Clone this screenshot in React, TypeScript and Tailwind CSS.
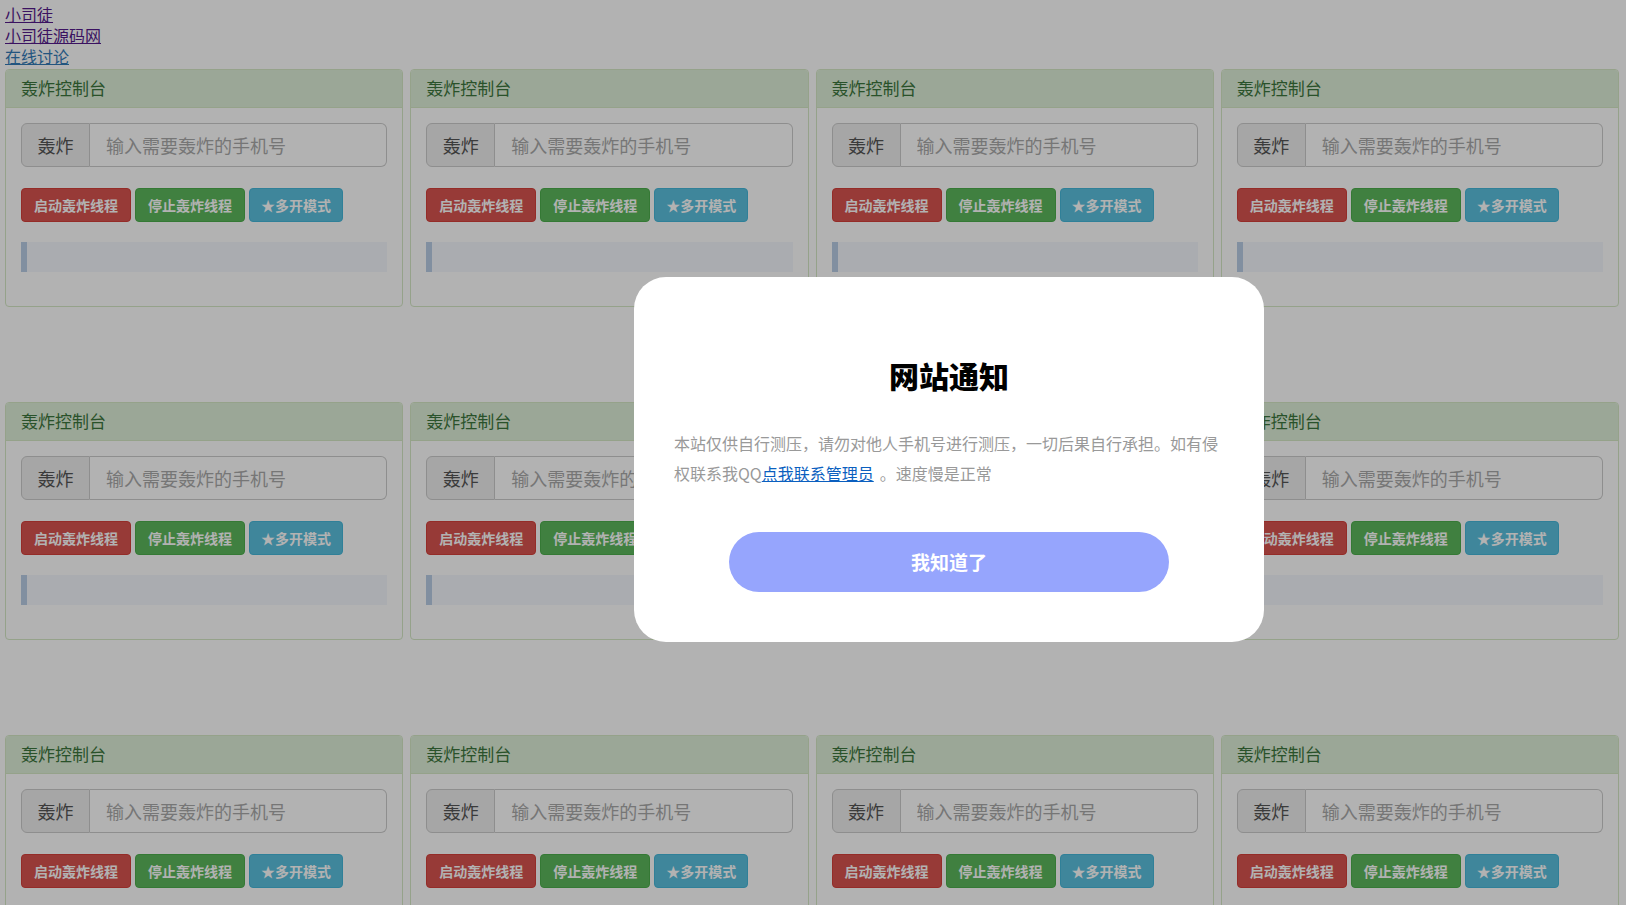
const links = [
  { label: "小司徒", visited: true },
  { label: "小司徒源码网", visited: true },
  { label: "在线讨论", visited: false },
];

function BombCard() {
  return (
    <div className="rounded-[4px] border border-[#d6e9c6] bg-white">
      <div className="h-[38px] border-b border-[#d6e9c6] bg-[#dff0d8] px-[15px] text-[17px] leading-[36px] text-[#3c763d] rounded-t-[3px]">
        轰炸控制台
      </div>
      <div className="px-[15px] pt-[15px] pb-[34px]">
        <div className="flex h-[44px]">
          <span className="flex w-[69px] items-center justify-center rounded-l-[6px] border border-[#ccc] bg-[#eee] text-[18px] text-[#555]">
            轰炸
          </span>
          <input
            className="min-w-0 flex-1 rounded-r-[6px] border border-l-0 border-[#ccc] px-[16px] text-[18px] text-[#555] placeholder:text-[#aaa] outline-none"
            placeholder="输入需要轰炸的手机号"
          />
        </div>
        <div className="mt-[21px] flex gap-[4px]">
          <button className="h-[34px] w-[110px] rounded-[4px] border border-[#d43f3a] bg-[#d9534f] text-[14px] font-bold text-white">
            启动轰炸线程
          </button>
          <button className="h-[34px] w-[110px] rounded-[4px] border border-[#4cae4c] bg-[#5cb85c] text-[14px] font-bold text-white">
            停止轰炸线程
          </button>
          <button className="h-[34px] w-[94px] rounded-[4px] border border-[#46b8da] bg-[#5bc0de] text-[14px] font-bold text-white">
            ★多开模式
          </button>
        </div>
        <div className="mt-[20px] flex h-[30px] bg-[#f4f7fc]">
          <div className="w-[6px] bg-[#b9cde6]" />
        </div>
      </div>
    </div>
  );
}

export default function App() {
  return (
    <div className="min-h-screen bg-white pt-[4px] pl-[5px] pr-[7px] font-['Microsoft_YaHei','Noto_Sans_CJK_SC',sans-serif]">
      <div className="flex flex-col text-[16px] leading-[21px]">
        {links.map((l) => (
          <a
            key={l.label}
            href="#"
            className={
              l.visited
                ? "self-start text-[#551a8b] underline"
                : "self-start text-[#337ab7] underline"
            }
          >
            {l.label}
          </a>
        ))}
      </div>
      <div className="mt-[2px] grid grid-cols-4 gap-x-[7px] gap-y-[95px]">
        {Array.from({ length: 12 }).map((_, i) => (
          <BombCard key={i} />
        ))}
      </div>

      <div className="fixed inset-0 bg-black/30" />
      <div className="fixed left-[634px] top-[277px] w-[630px] rounded-[32px] bg-white px-[40px] pt-[80px] pb-[50px]">
        <h2 className="text-center text-[30px] font-black leading-[36px] text-black">
          网站通知
        </h2>
        <p className="mt-[35px] text-[16px] leading-[30px] text-[#999]">
          本站仅供自行测压，请勿对他人手机号进行测压，一切后果自行承担。如有侵权联系我QQ
          <a href="#" className="text-[#0b5fbf] underline">
            点我联系管理员
          </a>
          <span className="ml-[6px]">。速度慢是正常</span>
        </p>
        <div className="mt-[44px] flex justify-center">
          <button className="h-[60px] w-[440px] rounded-full bg-[#96a5fd] text-[19px] font-bold text-white">
            我知道了
          </button>
        </div>
      </div>
    </div>
  );
}
